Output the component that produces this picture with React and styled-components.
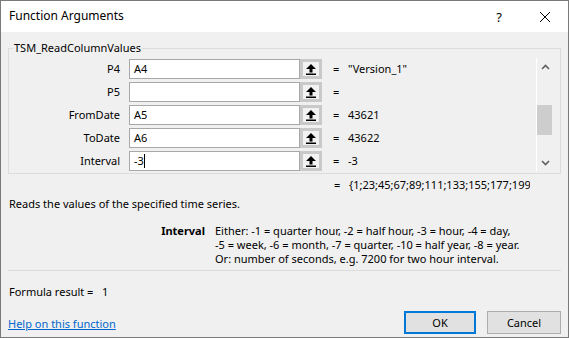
import React from "react";
import styled, { createGlobalStyle } from "styled-components";

const GlobalStyle = createGlobalStyle`
  html, body {
    margin: 0;
    padding: 0;
    background: #ffffff;
  }
`;

const Window = styled.div`
  width: 569px;
  height: 338px;
  box-sizing: border-box;
  border: 1px solid #7a7a7a;
  background: #f0f0f0;
  display: flex;
  flex-direction: column;
  font-family: "Noto Sans", "Open Sans", sans-serif;
  font-size: 11px;
  line-height: 16px;
  color: #000;
  overflow: hidden;
`;

const TitleBar = styled.div`
  height: 31px;
  flex: none;
  background: #ffffff;
  display: flex;
  align-items: center;
  padding-left: 8px;
`;

const Title = styled.div`
  flex: 1;
  font-size: 12px;
  padding-bottom: 1px;
`;

const TitleButton = styled.div`
  width: 46px;
  height: 31px;
  display: flex;
  align-items: center;
  justify-content: center;
  font-size: 13px;
`;

const Body = styled.div`
  padding: 0 7px;
  display: flex;
  flex-direction: column;
`;

const GroupBox = styled.fieldset`
  margin: 8px 0 0 0;
  padding: 3px 7px 2px 0;
  border: 1px solid #dcdcdc;
  display: flex;
  min-width: 0;
`;

const Legend = styled.legend`
  padding: 0 1px;
  margin-left: 4px;
  line-height: 16px;
`;

const Rows = styled.div`
  flex: 1;
  display: flex;
  flex-direction: column;
  gap: 3px;
`;

const Row = styled.div`
  display: grid;
  grid-template-columns: 120px 171px 22px 1fr;
  align-items: center;
  height: 20px;
`;

const Label = styled.div`
  text-align: right;
  padding-right: 9px;
`;

const Input = styled.div`
  height: 20px;
  box-sizing: border-box;
  border: 1px solid #a8a8a8;
  background: #ffffff;
  padding-left: 4px;
  display: flex;
  align-items: center;
`;

const Caret = styled.span`
  display: inline-block;
  width: 1px;
  height: 14px;
  background: #000;
`;

const RefButton = styled.div`
  height: 20px;
  box-sizing: border-box;
  border: 3px solid #c9c9c9;
  background: #f2f2f2;
  display: flex;
  align-items: center;
  justify-content: center;
`;

const Value = styled.div`
  display: flex;
  padding-left: 11px;
  white-space: nowrap;
`;

const Eq = styled.span`
  width: 15px;
  flex: none;
`;

const ScrollBar = styled.div`
  width: 17px;
  flex: none;
  box-sizing: border-box;
  border-left: 1px solid #ffffff;
  margin-top: -1px;
  display: flex;
  flex-direction: column;
  align-items: center;
`;

const ScrollArrow = styled.div`
  height: 17px;
  width: 16px;
  display: flex;
  align-items: center;
  justify-content: center;
`;

const Track = styled.div`
  flex: 1;
  width: 16px;
  display: flex;
  flex-direction: column;
`;

const Thumb = styled.div`
  margin-top: ${(p) => p.$offset}px;
  height: 30px;
  width: 15px;
  background: #cdcdcd;
`;

const ResultLine = styled.div`
  display: flex;
  padding-left: 326px;
  margin-top: 3px;
  height: 16px;
`;

const Clip = styled.span`
  width: 181px;
  overflow: hidden;
  white-space: nowrap;
`;

const Description = styled.div`
  margin-top: 3px;
  height: 16px;
  padding-left: 1px;
`;

const ArgHelp = styled.div`
  display: grid;
  grid-template-columns: 207px 1fr;
  margin-top: 12px;
  line-height: 14px;
  height: 42px;
`;

const ArgName = styled.div`
  font-weight: bold;
  text-align: right;
  padding-right: 10px;
`;

const Separator = styled.div`
  height: 1px;
  background: #dcdcdc;
  margin-top: 4px;
`;

const FormulaResult = styled.div`
  margin-top: 13px;
  height: 16px;
  padding-left: 1px;
`;

const Footer = styled.div`
  display: flex;
  align-items: center;
  margin-top: 11px;
  height: 23px;
`;

const HelpLink = styled.a`
  flex: 1;
  color: #0066cc;
  text-decoration: underline;
  padding-top: 2px;
`;

const Button = styled.button`
  width: ${(p) => p.$width}px;
  height: 23px;
  margin-left: ${(p) => p.$gap}px;
  box-sizing: border-box;
  font-family: inherit;
  font-size: 11px;
  color: #000;
  background: #e1e1e1;
  border: ${(p) => (p.$primary ? "2px solid #0078d7" : "1px solid #adadad")};
  padding: 0;
`;

const RefIcon = () => (
  <svg width="10" height="11" viewBox="0 0 10 11">
    <path d="M5 0 L10 5 L6.5 5 L6.5 8.5 L3.5 8.5 L3.5 5 L0 5 Z" fill="#000" />
    <rect x="0" y="9.5" width="10" height="1.5" fill="#000" />
  </svg>
);

const Chevron = ({ down }) => (
  <svg width="9" height="6" viewBox="0 0 9 6">
    <path
      d={down ? "M1 1 L4.5 4.5 L8 1" : "M1 5 L4.5 1.5 L8 5"}
      fill="none"
      stroke="#606060"
      strokeWidth="1.6"
    />
  </svg>
);

const CloseIcon = () => (
  <svg width="10" height="10" viewBox="0 0 10 10">
    <path d="M0 0 L10 10 M10 0 L0 10" stroke="#000" strokeWidth="1" />
  </svg>
);

const args = [
  { name: "P4", input: "A4", value: "\"Version_1\"" },
  { name: "P5", input: "", value: "" },
  { name: "FromDate", input: "A5", value: "43621" },
  { name: "ToDate", input: "A6", value: "43622" },
  { name: "Interval", input: "-3", value: "-3", focused: true },
];

function App() {
  return (
    <>
      <GlobalStyle />
      <Window>
        <TitleBar>
          <Title>Function Arguments</Title>
          <TitleButton>?</TitleButton>
          <TitleButton>
            <CloseIcon />
          </TitleButton>
        </TitleBar>
        <Body>
          <GroupBox>
            <Legend>TSM_ReadColumnValues</Legend>
            <Rows>
              {args.map((a) => (
                <Row key={a.name}>
                  <Label>{a.name}</Label>
                  <Input>
                    {a.input}
                    {a.focused && <Caret />}
                  </Input>
                  <RefButton>
                    <RefIcon />
                  </RefButton>
                  <Value>
                    <Eq>=</Eq>
                    {a.value}
                  </Value>
                </Row>
              ))}
            </Rows>
            <ScrollBar>
              <ScrollArrow>
                <Chevron />
              </ScrollArrow>
              <Track>
                <Thumb $offset={30} />
              </Track>
              <ScrollArrow>
                <Chevron down />
              </ScrollArrow>
            </ScrollBar>
          </GroupBox>
          <ResultLine>
            <Eq>=</Eq>
            <Clip>{"{1;23;45;67;89;111;133;155;177;199;221;243}"}</Clip>
          </ResultLine>
          <Description>Reads the values of the specified time series.</Description>
          <ArgHelp>
            <ArgName>Interval</ArgName>
            <div>
              Either: -1 = quarter hour, -2 = half hour, -3 = hour, -4 = day,
              <br />
              -5 = week, -6 = month, -7 = quarter, -10 = half year, -8 = year.
              <br />
              Or: number of seconds, e.g. 7200 for two hour interval.
            </div>
          </ArgHelp>
          <Separator />
          <FormulaResult>Formula result = &nbsp;&nbsp;1</FormulaResult>
          <Footer>
            <HelpLink href="#">Help on this function</HelpLink>
            <Button $primary $width={72} $gap={0}>OK</Button>
            <Button $width={74} $gap={11}>Cancel</Button>
          </Footer>
        </Body>
      </Window>
    </>
  );
}

export default App;
